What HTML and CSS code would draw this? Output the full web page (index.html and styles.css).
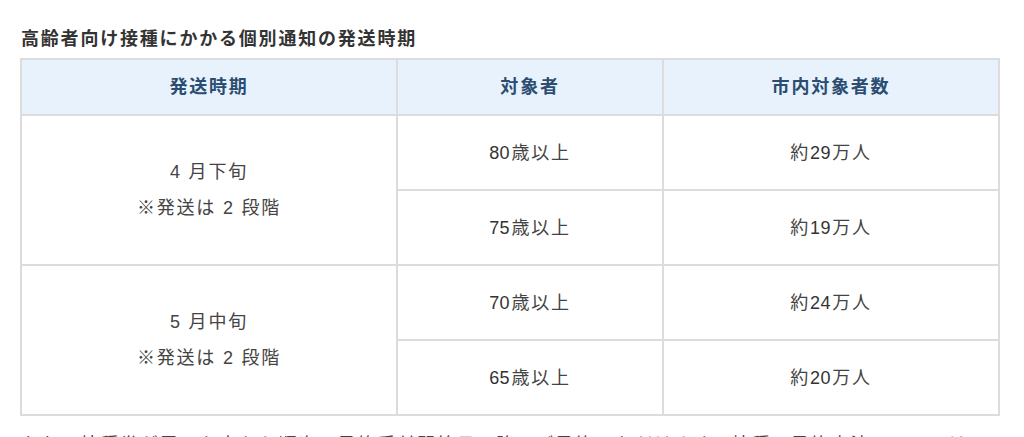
FILE: index.html
```html
<!DOCTYPE html>
<html lang="ja">
<head>
<meta charset="utf-8">
<title>高齢者向け接種にかかる個別通知の発送時期</title>
<link rel="stylesheet" href="styles.css">
</head>
<body>
<main class="page">
  <h2 class="caption">高齢者向け接種にかかる個別通知の発送時期</h2>
  <table class="schedule">
    <colgroup>
      <col class="c1"><col class="c2"><col class="c3">
    </colgroup>
    <thead>
      <tr><th>発送時期</th><th>対象者</th><th>市内対象者数</th></tr>
    </thead>
    <tbody>
      <tr><td rowspan="2">4 月下旬<br>※発送は 2 段階</td><td><span class="num">80</span>歳以上</td><td>約<span class="num">29</span>万人</td></tr>
      <tr><td><span class="num">75</span>歳以上</td><td>約<span class="num">19</span>万人</td></tr>
      <tr><td rowspan="2">5 月中旬<br>※発送は 2 段階</td><td><span class="num">70</span>歳以上</td><td>約<span class="num">24</span>万人</td></tr>
      <tr><td><span class="num">65</span>歳以上</td><td>約<span class="num">20</span>万人</td></tr>
    </tbody>
  </table>
  <p class="note">なお、接種券が届いた方から順次、予約受付開始日以降にご予約いただけます。接種の予約方法については、後日お知らせします。</p>
</main>
</body>
</html>
```

FILE: styles.css
```css
html, body {
  margin: 0;
  padding: 0;
  background: #ffffff;
}
body {
  font-family: "Liberation Sans", "Noto Sans CJK JP", sans-serif;
  color: #444444;
  overflow: hidden;
}
.page {
  padding: 26px 24px 0 20px;
}
.caption {
  margin: 0 0 5px 1px;
  font-size: 18px;
  line-height: 27px;
  font-weight: 700;
  letter-spacing: 0.1em;
  color: #333333;
}
.schedule {
  width: 980px;
  border-collapse: separate;
  border-spacing: 0;
  table-layout: fixed;
  border-top: 2px solid #dcdcdc;
  border-left: 2px solid #dcdcdc;
  font-size: 18px;
  letter-spacing: 0.1em;
}
.c1 { width: 38.45%; }
.c2 { width: 27.2%; }
.c3 { width: 34.35%; }
.schedule th,
.schedule td {
  border-right: 2px solid #dcdcdc;
  border-bottom: 2px solid #dcdcdc;
  text-align: center;
  vertical-align: middle;
  padding: 0 10px;
}
.schedule th {
  background: #e7f2fd;
  color: #2b4d71;
  font-weight: 700;
  line-height: 36px;
  height: 54px;
  box-sizing: border-box;
  padding-top: 9px;
  padding-bottom: 9px;
}
.schedule td {
  color: #444444;
  font-weight: 400;
  line-height: 36px;
  padding-top: 18.5px;
  padding-bottom: 18.5px;
}
.num {
  letter-spacing: 0.02em;
  margin-right: 0.08em;
  color: #333333;
}
.note {
  margin: 13px 0 0 1px;
  font-size: 18px;
  line-height: 32px;
  letter-spacing: 0.1em;
  color: #444444;
}
```
